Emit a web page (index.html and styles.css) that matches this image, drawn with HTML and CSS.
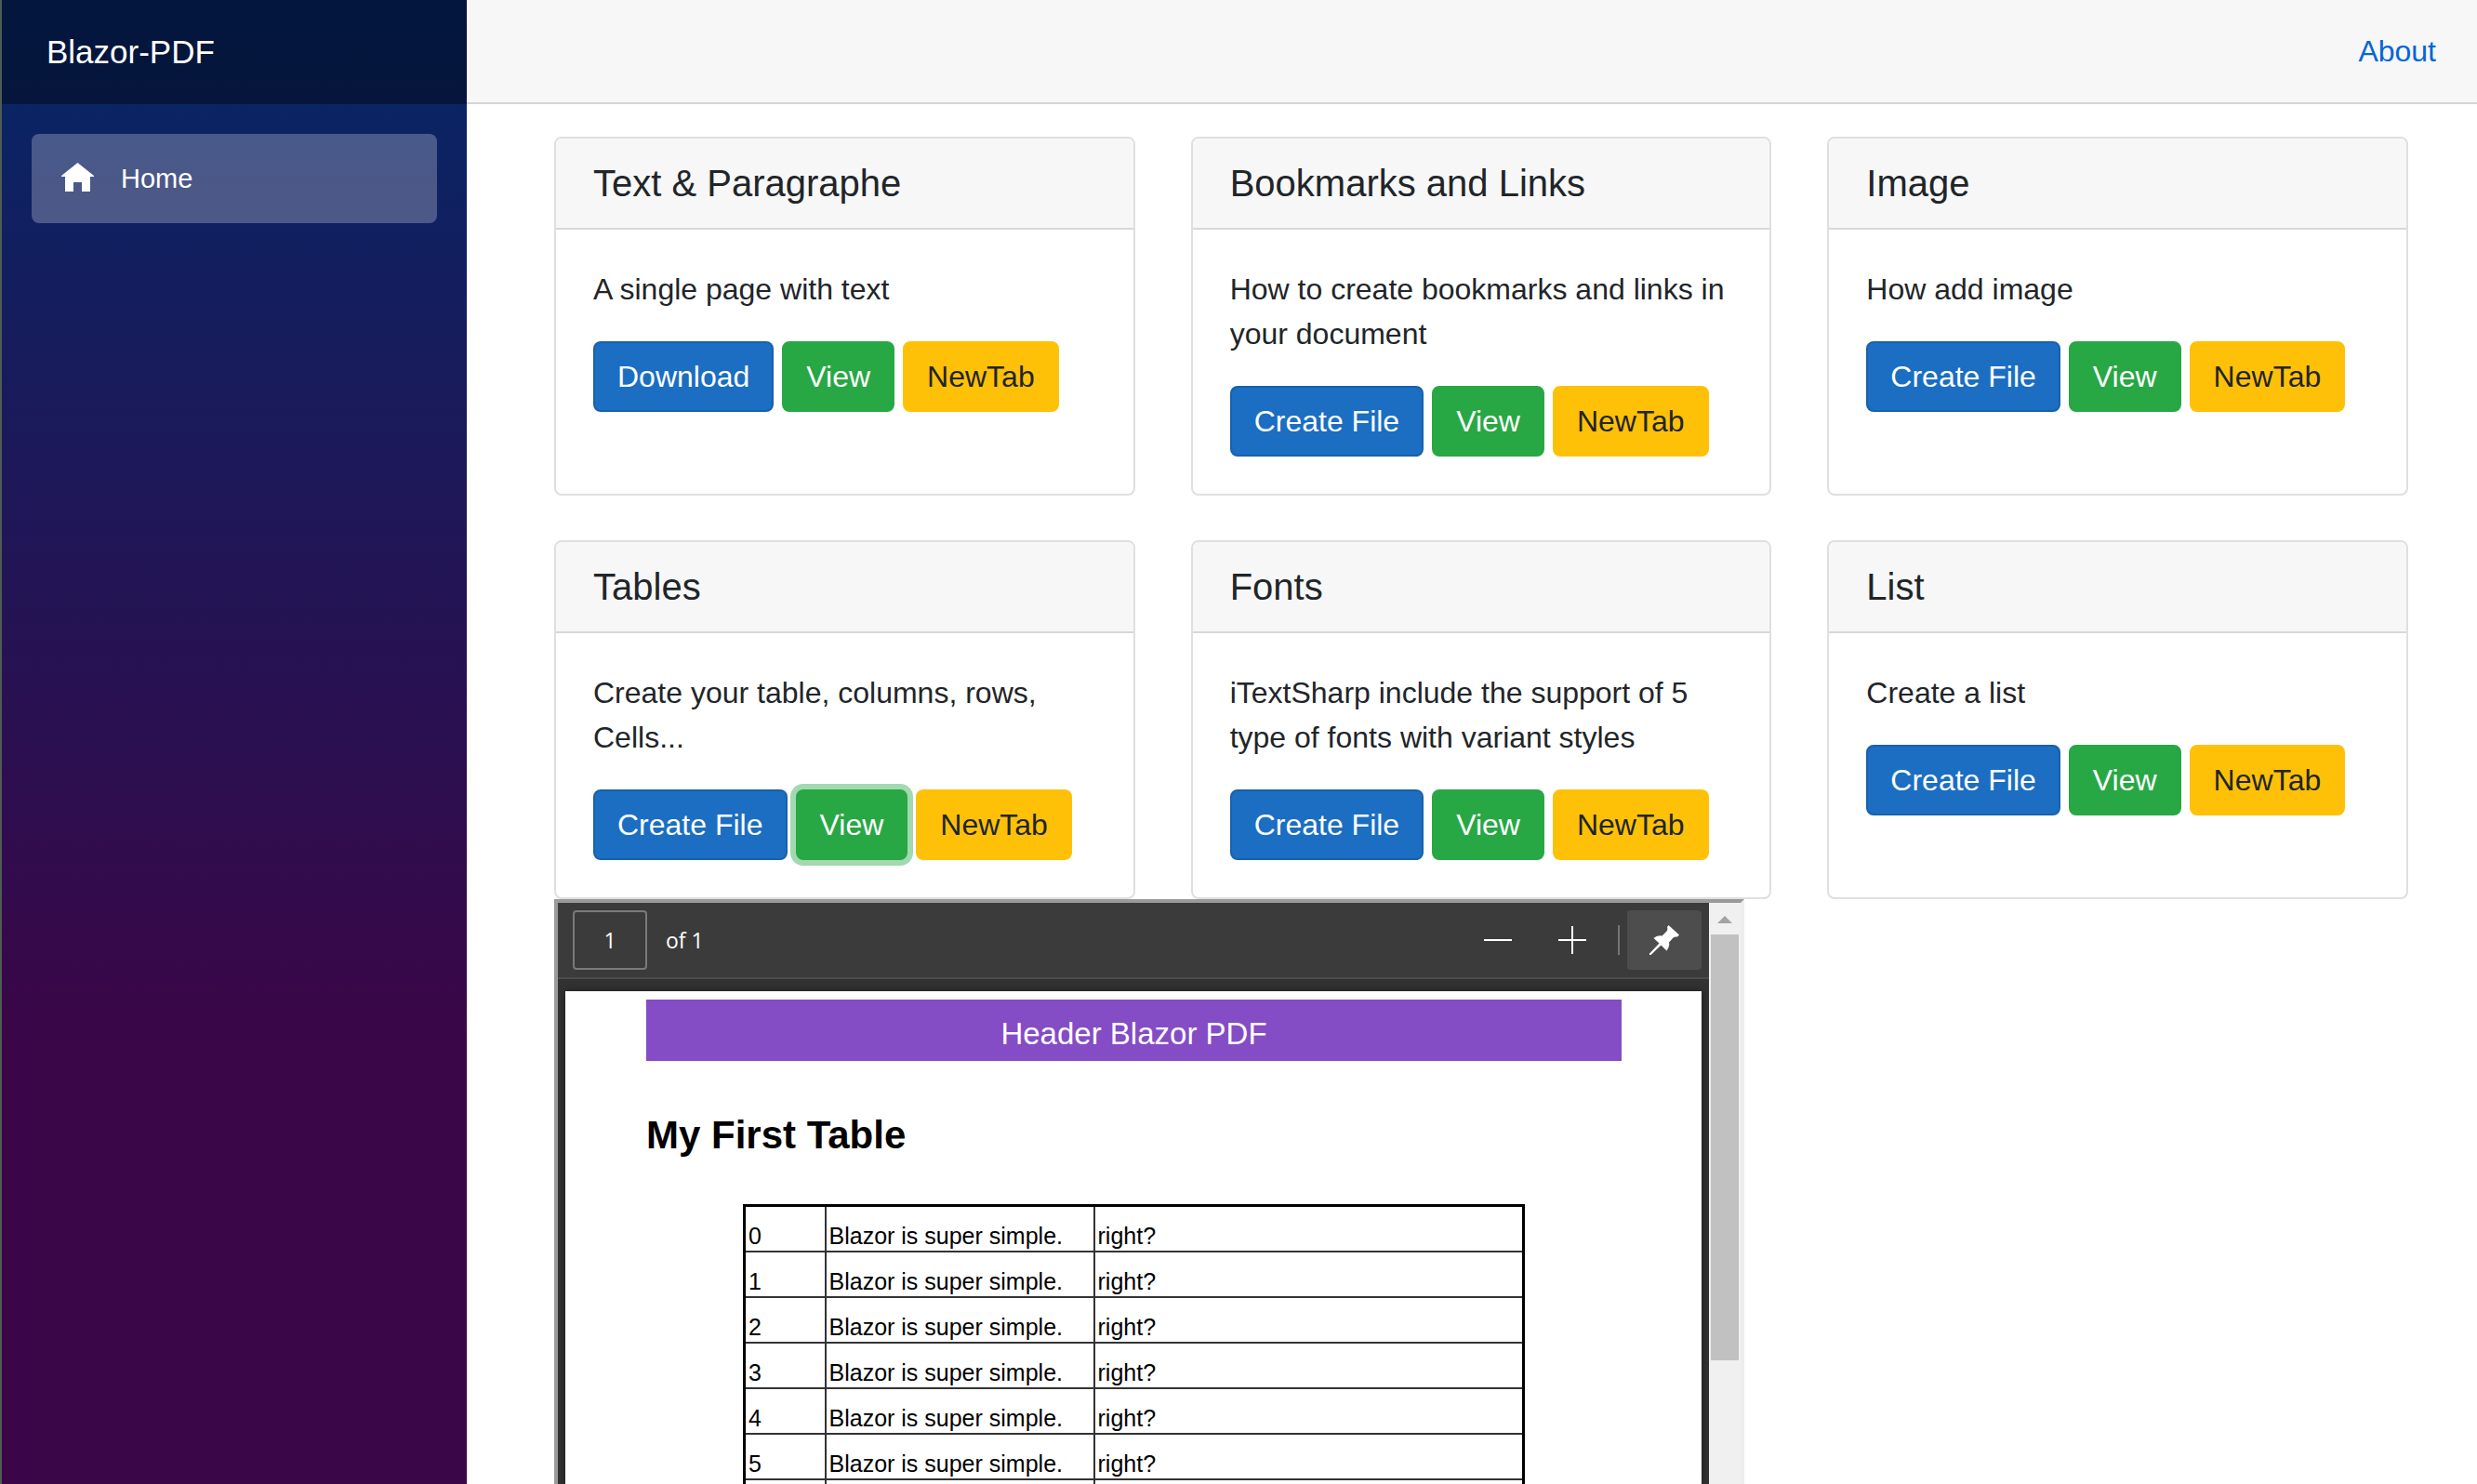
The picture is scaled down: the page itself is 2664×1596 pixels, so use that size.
FILE: index.html
```html
<!DOCTYPE html>
<html lang="en">
<head>
<meta charset="utf-8">
<title>Blazor-PDF</title>
<link rel="stylesheet" href="styles.css">
</head>
<body>
<div class="app">
  <aside class="sidebar">
    <div class="brand"><a class="brand-link" href="#">Blazor-PDF</a></div>
    <nav class="nav">
      <a class="nav-link" href="#">
        <svg class="nav-icon" viewBox="0 0 36 36" aria-hidden="true"><path d="M17.500 1L35 15v1h-4v16h-9V22h-9v10H4V16H0v-1z"/></svg>
        Home
      </a>
    </nav>
  </aside>
  <main class="main">
    <header class="topbar"><a class="about" href="#">About</a></header>
    <div class="content">
      <div class="cards">
        <section class="card">
          <h4 class="card-header">Text &amp; Paragraphe</h4>
          <div class="card-body">
            <p class="card-text">A single page with text</p>
            <div class="actions"><button class="btn btn-primary">Download</button><button class="btn btn-success">View</button><button class="btn btn-warning">NewTab</button></div>
          </div>
        </section>
        <section class="card">
          <h4 class="card-header">Bookmarks and Links</h4>
          <div class="card-body">
            <p class="card-text">How to create bookmarks and links in your document</p>
            <div class="actions"><button class="btn btn-primary">Create File</button><button class="btn btn-success">View</button><button class="btn btn-warning">NewTab</button></div>
          </div>
        </section>
        <section class="card">
          <h4 class="card-header">Image</h4>
          <div class="card-body">
            <p class="card-text">How add image</p>
            <div class="actions"><button class="btn btn-primary">Create File</button><button class="btn btn-success">View</button><button class="btn btn-warning">NewTab</button></div>
          </div>
        </section>
        <section class="card">
          <h4 class="card-header">Tables</h4>
          <div class="card-body">
            <p class="card-text">Create your table, columns, rows, Cells...</p>
            <div class="actions"><button class="btn btn-primary">Create File</button><button class="btn btn-success is-focused">View</button><button class="btn btn-warning">NewTab</button></div>
          </div>
        </section>
        <section class="card">
          <h4 class="card-header">Fonts</h4>
          <div class="card-body">
            <p class="card-text">iTextSharp include the support of 5 type of fonts with variant styles</p>
            <div class="actions"><button class="btn btn-primary">Create File</button><button class="btn btn-success">View</button><button class="btn btn-warning">NewTab</button></div>
          </div>
        </section>
        <section class="card">
          <h4 class="card-header">List</h4>
          <div class="card-body">
            <p class="card-text">Create a list</p>
            <div class="actions"><button class="btn btn-primary">Create File</button><button class="btn btn-success">View</button><button class="btn btn-warning">NewTab</button></div>
          </div>
        </section>
      </div>

      <section class="viewer" aria-label="PDF preview">
        <div class="viewer-main">
          <div class="toolbar">
            <input class="page-input" id="page" type="text" value="1">
            <label class="page-total" for="page">of 1</label>
            <button class="tool" aria-label="Zoom out"><svg class="tool-icon" viewBox="0 0 30 30"><path d="M0 14h30v2H0z"/></svg></button>
            <button class="tool" aria-label="Zoom in"><svg class="tool-icon" viewBox="0 0 30 30"><path d="M0 14h14V0h2v14h14v2H16v14h-2V16H0z"/></svg></button>
            <span class="tool-divider"></span>
            <button class="tool tool-active" aria-label="Pin toolbar"><svg class="pin-icon" viewBox="0 0 32 32"><path d="M20.500 0L32 10.500 30 12.500Q27.500 12 25.500 13.500L21 18.500Q22 23 18.500 27.500L12.500 21.500 1.500 32 0 32 0 30.500 10.500 19.500 4.500 14Q8 10.500 13.500 11.500L18.500 6.500Q20 4.500 19 2Z"/></svg></button>
          </div>
          <div class="canvas">
            <article class="page">
              <div class="page-header">Header Blazor PDF</div>
              <h1 class="page-title">My First Table</h1>
              <table class="sheet">
                <colgroup><col class="col-index"><col class="col-text"><col></colgroup>
                <tbody>
                  <tr><td>0</td><td>Blazor is super simple.</td><td>right?</td></tr>
                  <tr><td>1</td><td>Blazor is super simple.</td><td>right?</td></tr>
                  <tr><td>2</td><td>Blazor is super simple.</td><td>right?</td></tr>
                  <tr><td>3</td><td>Blazor is super simple.</td><td>right?</td></tr>
                  <tr><td>4</td><td>Blazor is super simple.</td><td>right?</td></tr>
                  <tr><td>5</td><td>Blazor is super simple.</td><td>right?</td></tr>
                  <tr><td></td><td></td><td></td></tr>
                </tbody>
              </table>
            </article>
          </div>
        </div>
        <div class="scrollbar">
          <svg class="scroll-arrow" viewBox="0 0 16 8" aria-hidden="true"><path d="M0 8L8 0l8 8z"/></svg>
          <div class="scroll-thumb"></div>
        </div>
      </section>
    </div>
  </main>
</div>
</body>
</html>
```
FILE: styles.css
```css
* { box-sizing: border-box; }

body {
  margin: 0;
  color: #212529;
  background: #fff;
  font: 32px/48px "Liberation Sans", Arial, sans-serif;
}

button, input { font: inherit; }

.app {
  display: flex;
  height: 100vh;
  overflow: hidden;
  border-left: 2px solid #4f5b55;
}

/* Sidebar */
.sidebar {
  flex: 0 0 500px;
  background: linear-gradient(180deg, #052767 0%, #3a0647 70%);
}
.brand {
  display: flex;
  align-items: center;
  height: 112px;
  padding-left: 48px;
  background: rgba(0, 0, 0, .4);
}
.brand-link {
  color: #fff;
  font-size: 35px;
  text-decoration: none;
}
.nav { padding: 32px; }
.nav-link {
  display: flex;
  align-items: center;
  gap: 28px;
  height: 96px;
  padding-left: 32px;
  border-radius: 8px;
  background: rgba(255, 255, 255, .25);
  color: #fff;
  font-size: 29px;
  text-decoration: none;
}
.nav-icon {
  width: 36px;
  height: 36px;
  fill: #fff;
}

/* Main area */
.main {
  display: flex;
  flex: 1;
  flex-direction: column;
  min-width: 0;
}
.topbar {
  display: flex;
  flex: 0 0 112px;
  align-items: center;
  justify-content: flex-end;
  padding-right: 44px;
  border-bottom: 2px solid #d6d5d5;
  background: #f7f7f7;
}
.about {
  color: #0366d6;
  text-decoration: none;
}
.content {
  display: flex;
  flex: 1;
  flex-direction: column;
  min-height: 0;
  padding: 35px 74px 0 94px;
}

/* Cards */
.cards {
  display: grid;
  grid-template-columns: repeat(3, 1fr);
  gap: 48px 60px;
}
.card {
  border: 2px solid #dfdfdf;
  border-radius: 8px;
  background: #fff;
}
.card-header {
  margin: 0;
  padding: 24px 40px;
  border-bottom: 2px solid #d8d8d8;
  border-radius: 6px 6px 0 0;
  background: #f7f7f7;
  font-size: 40px;
  font-weight: 400;
  line-height: 48px;
}
.card-body { padding: 40px; }
.card-text { margin: 0 0 32px; }
.actions {
  display: flex;
  gap: 9px;
}
.btn {
  padding: 12px 24px;
  border: 2px solid;
  border-radius: 8px;
}
.btn-primary {
  border-color: #1861ac;
  background: #1b6ec2;
  color: #fff;
}
.btn-success {
  border-color: #28a745;
  background: #28a745;
  color: #fff;
}
.btn-warning {
  border-color: #ffc107;
  background: #ffc107;
  color: #212529;
}
.is-focused { box-shadow: 0 0 0 6px #a2d9b0; }

/* PDF viewer */
.viewer {
  display: flex;
  flex: 1;
  width: 1280px;
  max-width: 100%;
  min-height: 0;
  overflow: hidden;
  border: 4px solid;
  border-color: #9a9a9a #ededed #ededed #9a9a9a;
  border-bottom: 0;
}
.viewer-main {
  display: flex;
  flex: 1;
  flex-direction: column;
  min-width: 0;
  background: #323232;
}
.toolbar {
  display: flex;
  flex: 0 0 82px;
  align-items: center;
  padding: 0 8px 0 16px;
  border-bottom: 2px solid #4b4b4b;
  background: #3b3b3b;
  color: #fff;
  font-family: "Open Sans", "Noto Sans", sans-serif;
  font-size: 23px;
}
.page-input {
  width: 80px;
  height: 64px;
  padding: 0;
  border: 2px solid #7a7a7a;
  border-radius: 4px;
  background: transparent;
  color: #fff;
  text-align: center;
}
.page-total { margin: 0 auto 0 20px; }
.tool {
  display: flex;
  align-items: center;
  justify-content: center;
  width: 80px;
  height: 64px;
  padding: 0;
  border: 0;
  border-radius: 4px;
  background: transparent;
}
.tool-active { background: #4d4d4d; }
.tool-icon {
  width: 30px;
  height: 30px;
  fill: #fff;
}
.pin-icon {
  width: 32px;
  height: 32px;
  fill: #fff;
}
.tool-divider {
  width: 2px;
  height: 32px;
  margin: 0 8px 0 9px;
  background: #757575;
}
.canvas {
  flex: 1;
  min-height: 0;
  padding: 13px 8px 0;
}
.page {
  height: 100%;
  padding: 9px 86px 0 87px;
  background: #fff;
  box-shadow: 0 0 8px #1c1c1c;
  color: #000;
}
.page-header {
  height: 66px;
  padding-top: 8px;
  background: #844cc5;
  color: #fff;
  font-size: 33px;
  line-height: 58px;
  text-align: center;
}
.page-title {
  margin: 56px 0 50px;
  font-size: 42px;
  line-height: 48px;
}
.sheet {
  width: calc(100% - 208px);
  margin: 0 auto;
  border: 3px solid #000;
  border-collapse: collapse;
  table-layout: fixed;
  font-size: 25px;
  line-height: 28px;
}
.sheet td {
  height: 49px;
  padding: 0 3px 2px;
  border: 2px solid #333;
  vertical-align: bottom;
}
.col-index { width: 87px; }
.col-text { width: 289px; }

/* Scrollbar */
.scrollbar {
  display: flex;
  flex: 0 0 34px;
  flex-direction: column;
  align-items: center;
  background: #f0f0f0;
}
.scroll-arrow {
  width: 16px;
  height: 8px;
  margin: 14px 0 12px;
  fill: #a3a3a3;
}
.scroll-thumb {
  flex: 0 0 458px;
  width: 30px;
  background: #c1c1c1;
}
```
